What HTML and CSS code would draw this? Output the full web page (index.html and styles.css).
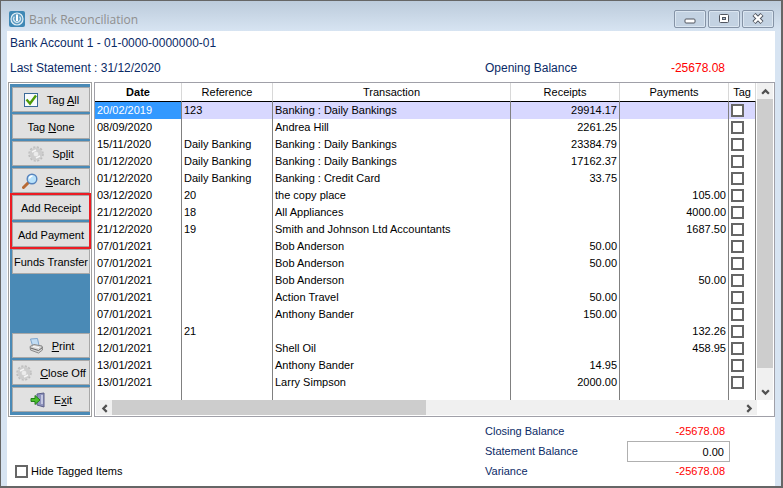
FILE: index.html
```html
<!DOCTYPE html>
<html lang="en">
<head>
    <meta charset="UTF-8">
    <meta name="viewport" content="width=device-width, initial-scale=1.0">
    <title>Bank Reconciliation</title>
    <link rel="stylesheet" href="styles.css">
</head>
<body>
    <div class="window">
        <!-- Title bar -->
        <header class="title-bar">
            <svg class="app-icon" viewBox="0 0 16 16">
                <rect width="16" height="16" rx="2" fill="#3f88b5"/>
                <circle cx="8" cy="8" r="6" fill="#5f9dc3" stroke="#e4f0f7" stroke-width="1.2"/>
                <path d="M5.4 5.6a3.4 3.4 0 1 0 5.2 0" fill="none" stroke="#d5e7f2" stroke-width="1.2"/>
                <path d="M8 3.5v6.5" stroke="#fff" stroke-width="2"/>
            </svg>
            <h1>Bank Reconciliation</h1>
            <div class="window-controls">
                <button type="button" aria-label="Minimize">
                    <svg viewBox="0 0 12 12"><rect x="1" y="6" width="10" height="4" rx="1" fill="#fff" stroke="#50555f"/></svg>
                </button>
                <button type="button" aria-label="Maximize">
                    <svg viewBox="0 0 12 12"><rect x="1.5" y="1.5" width="9" height="8" rx="1" fill="#fff" stroke="#50555f"/><rect x="4.5" y="4.5" width="3" height="2" fill="#a9bdd4" stroke="#50555f"/></svg>
                </button>
                <button type="button" aria-label="Close">
                    <svg viewBox="0 0 12 12"><path d="M2 1.5l8 8M10 1.5l-8 8" stroke="#50555f" stroke-width="4.4"/><path d="M2.4 1.9l7.2 7.2M9.6 1.9l-7.2 7.2" stroke="#fff" stroke-width="2.4"/></svg>
                </button>
            </div>
        </header>

        <main class="content">
            <!-- Account summary -->
            <div class="account">Bank Account 1 - 01-0000-0000000-01</div>
            <div class="statement">
                <span>Last Statement : 31/12/2020</span>
                <div class="opening">
                    <span>Opening Balance</span>
                    <span class="negative">-25678.08</span>
                </div>
            </div>

            <div class="panels">
                <!-- Actions -->
                <nav class="sidebar">
                    <button type="button">
                        <svg class="icon" viewBox="0 0 16 16"><rect x="1.5" y="1.5" width="13" height="13" fill="#f8fbfd" stroke="#3b6a98"/><path d="M3.5 7.5l3.5 4 6-8" fill="none" stroke="#4f9a06" stroke-width="2.4"/></svg>
                        <span>Tag <u>A</u>ll</span>
                    </button>
                    <button type="button"><span>Tag <u>N</u>one</span></button>
                    <button type="button">
                        <svg class="icon" viewBox="0 0 16 16"><circle cx="8" cy="8" r="6.5" fill="none" stroke="#bdbdbd" stroke-width="2.5" stroke-dasharray="2 1.4"/><circle cx="8" cy="8" r="4.5" fill="none" stroke="#cdcdcd" stroke-width="4"/><path d="M4 6l4-2M8 12l4-2" stroke="#f4f4f4" stroke-width="1.4"/><circle cx="8" cy="8" r="2" fill="#ececec"/></svg>
                        <span>Sp<u>l</u>it</span>
                    </button>
                    <button type="button">
                        <svg class="icon" viewBox="0 0 16 16"><path d="M1.5 14.5l5-5" stroke="#b86a35" stroke-width="3" stroke-linecap="round"/><circle cx="10" cy="6" r="4.8" fill="#b9e2fb" stroke="#5784bd" stroke-width="1.4"/><path d="M7.5 5.5a3 3 0 0 1 3-2.5" fill="none" stroke="#fff" stroke-width="1.5"/></svg>
                        <span><u>S</u>earch</span>
                    </button>
                    <div class="highlighted">
                        <button type="button">Add Receipt</button>
                        <button type="button">Add Payment</button>
                    </div>
                    <button type="button">Funds Transfer</button>
                    <div class="spacer"></div>
                    <button type="button">
                        <svg class="icon" viewBox="0 0 16 16"><path d="M2.5 1l7-.5 1.5 7-6 1.5z" fill="#c2ddf4" stroke="#7fa6cd"/><path d="M2 8.500l4-2 8 1.500.5 4-4 3-8-3z" fill="#d7d7d7" stroke="#888"/><path d="M2.500 10l8 2.500 4-3" fill="none" stroke="#666"/><path d="M5 8.500l6 1" stroke="#fff"/></svg>
                        <span><u>P</u>rint</span>
                    </button>
                    <button type="button">
                        <svg class="icon" viewBox="0 0 16 16"><circle cx="8" cy="8" r="6.5" fill="none" stroke="#bdbdbd" stroke-width="2.5" stroke-dasharray="2 1.4"/><circle cx="8" cy="8" r="4.5" fill="none" stroke="#cdcdcd" stroke-width="4"/><path d="M4 6l4-2M8 12l4-2" stroke="#f4f4f4" stroke-width="1.4"/><circle cx="8" cy="8" r="2" fill="#ececec"/></svg>
                        <span><u>C</u>lose Off</span>
                    </button>
                    <button type="button">
                        <svg class="icon" viewBox="0 0 16 16"><path d="M7 2l7-1v14l-7-2z" fill="#8f93bd" stroke="#5b5f88"/><path d="M12 3v9" stroke="#c5c8e2" stroke-width="2"/><path d="M1 6.5h4v-3l5 4.500-5 4.500v-3h-4z" fill="#4cc02c" stroke="#23801a"/></svg>
                        <span>E<u>x</u>it</span>
                    </button>
                </nav>

                <!-- Transactions -->
                <section class="grid">
                    <div class="grid-body">
                        <table>
                            <colgroup>
                                <col class="col-date"><col class="col-ref"><col><col class="col-amount"><col class="col-amount"><col class="col-tag">
                            </colgroup>
                            <thead>
                                <tr><th class="sorted">Date</th><th>Reference</th><th>Transaction</th><th>Receipts</th><th>Payments</th><th>Tag</th></tr>
                            </thead>
                            <tbody>
                                <tr class="selected"><td>20/02/2019</td><td>123</td><td>Banking : Daily Bankings</td><td>29914.17</td><td></td><td><input type="checkbox" aria-label="Tag"></td></tr>
                                <tr><td>08/09/2020</td><td></td><td>Andrea Hill</td><td>2261.25</td><td></td><td><input type="checkbox" aria-label="Tag"></td></tr>
                                <tr><td>15/11/2020</td><td>Daily Banking</td><td>Banking : Daily Bankings</td><td>23384.79</td><td></td><td><input type="checkbox" aria-label="Tag"></td></tr>
                                <tr><td>01/12/2020</td><td>Daily Banking</td><td>Banking : Daily Bankings</td><td>17162.37</td><td></td><td><input type="checkbox" aria-label="Tag"></td></tr>
                                <tr><td>01/12/2020</td><td>Daily Banking</td><td>Banking : Credit Card</td><td>33.75</td><td></td><td><input type="checkbox" aria-label="Tag"></td></tr>
                                <tr><td>03/12/2020</td><td>20</td><td>the copy place</td><td></td><td>105.00</td><td><input type="checkbox" aria-label="Tag"></td></tr>
                                <tr><td>21/12/2020</td><td>18</td><td>All Appliances</td><td></td><td>4000.00</td><td><input type="checkbox" aria-label="Tag"></td></tr>
                                <tr><td>21/12/2020</td><td>19</td><td>Smith and Johnson Ltd Accountants</td><td></td><td>1687.50</td><td><input type="checkbox" aria-label="Tag"></td></tr>
                                <tr><td>07/01/2021</td><td></td><td>Bob Anderson</td><td>50.00</td><td></td><td><input type="checkbox" aria-label="Tag"></td></tr>
                                <tr><td>07/01/2021</td><td></td><td>Bob Anderson</td><td>50.00</td><td></td><td><input type="checkbox" aria-label="Tag"></td></tr>
                                <tr><td>07/01/2021</td><td></td><td>Bob Anderson</td><td></td><td>50.00</td><td><input type="checkbox" aria-label="Tag"></td></tr>
                                <tr><td>07/01/2021</td><td></td><td>Action Travel</td><td>50.00</td><td></td><td><input type="checkbox" aria-label="Tag"></td></tr>
                                <tr><td>07/01/2021</td><td></td><td>Anthony Bander</td><td>150.00</td><td></td><td><input type="checkbox" aria-label="Tag"></td></tr>
                                <tr><td>12/01/2021</td><td>21</td><td></td><td></td><td>132.26</td><td><input type="checkbox" aria-label="Tag"></td></tr>
                                <tr><td>12/01/2021</td><td></td><td>Shell Oil</td><td></td><td>458.95</td><td><input type="checkbox" aria-label="Tag"></td></tr>
                                <tr><td>13/01/2021</td><td></td><td>Anthony Bander</td><td>14.95</td><td></td><td><input type="checkbox" aria-label="Tag"></td></tr>
                                <tr><td>13/01/2021</td><td></td><td>Larry Simpson</td><td>2000.00</td><td></td><td><input type="checkbox" aria-label="Tag"></td></tr>
                                <tr class="filler"><td></td><td></td><td></td><td></td><td></td><td></td></tr>
                            </tbody>
                        </table>
                        <div class="scroll-v">
                            <button type="button" aria-label="Scroll up"><svg viewBox="0 0 8 8"><path d="M1 6l3-3 3 3" /></svg></button>
                            <div class="thumb"></div>
                            <button type="button" aria-label="Scroll down"><svg viewBox="0 0 8 8"><path d="M1 2l3 3 3-3" /></svg></button>
                        </div>
                    </div>
                    <div class="scroll-h">
                        <button type="button" aria-label="Scroll left"><svg viewBox="0 0 8 8"><path d="M6 1l-3 3 3 3" /></svg></button>
                        <div class="thumb"></div>
                        <button type="button" aria-label="Scroll right"><svg viewBox="0 0 8 8"><path d="M2 1l3 3-3 3" /></svg></button>
                    </div>
                </section>
            </div>

            <!-- Totals -->
            <footer class="footer">
                <label class="hide-tagged"><input type="checkbox"> Hide Tagged Items</label>
                <div class="totals">
                    <span>Closing Balance</span>
                    <span class="negative">-25678.08</span>
                    <label for="statementBalance">Statement Balance</label>
                    <input type="text" id="statementBalance" value="0.00">
                    <span>Variance</span>
                    <span class="negative">-25678.08</span>
                </div>
            </footer>
        </main>
    </div>
</body>
</html>
```
FILE: styles.css
```css
* {
    box-sizing: border-box;
}
body {
    margin: 0;
    font-family: "Liberation Sans", Arial, sans-serif;
    font-size: 11px;
    color: #000;
}
button, input {
    font: inherit;
    color: inherit;
    margin: 0;
}
.window {
    display: flex;
    flex-direction: column;
    min-height: 100vh;
    border: 1px solid #666;
    border-right-width: 2px;
    border-bottom-width: 2px;
    background: #d7e4f2;
    padding: 0 6px;
}
.title-bar {
    display: flex;
    align-items: center;
    height: 30px;
    margin: 0 -6px;
    padding: 6px 7px 0 8px;
    background: linear-gradient(#bccbdb, #d7e4f2);
}
.app-icon {
    width: 16px;
    height: 16px;
}
.title-bar h1 {
    flex: 1;
    margin: 0 0 0 4px;
    font-family: "Open Sans", sans-serif;
    font-size: 12px;
    font-weight: normal;
    color: #8f8f8f;
}
.window-controls {
    display: flex;
    gap: 2px;
}
.window-controls button {
    display: flex;
    align-items: center;
    justify-content: center;
    width: 32px;
    height: 18px;
    padding: 0;
    border: 1px solid #8593a6;
    border-radius: 2px;
    background: #c3d2e2;
    box-shadow: inset 0 0 0 1px #dbe6f1;
}
.window-controls svg {
    width: 12px;
    height: 12px;
}
.content {
    flex: 1;
    display: flex;
    flex-direction: column;
    background: #fff;
}
.account, .statement {
    height: 25px;
    line-height: 25px;
    padding-left: 3px;
    font-size: 12px;
    color: #0a2a66;
}
.statement {
    display: flex;
    justify-content: space-between;
    height: 26px;
}
.opening {
    display: flex;
    justify-content: space-between;
    width: 240px;
    margin-right: 50px;
}
.negative {
    color: #f00;
}

/* Panels */
.panels {
    display: flex;
    gap: 2px;
    height: 335px;
    padding: 0 0 0 1px;
}
.sidebar {
    display: flex;
    flex-direction: column;
    gap: 2px;
    width: 84px;
    padding: 4px 2px 4px 3px;
    border: 1px solid #a0a0a0;
    background: #4a8ab6;
    box-shadow: inset 0 0 0 1px #fff;
}
.sidebar button {
    display: flex;
    align-items: center;
    justify-content: center;
    gap: 8px;
    width: 78px;
    height: 25px;
    padding: 0;
    border: 1px solid #a8a8a8;
    background: #e1e1e1;
    white-space: nowrap;
}
.icon {
    width: 16px;
    height: 16px;
}
.highlighted {
    display: flex;
    flex-direction: column;
    gap: 2px;
    outline: 2px solid #ec1c24;
}
.spacer {
    flex: 1;
}

/* Transaction table */
.grid {
    flex: 1;
    display: flex;
    flex-direction: column;
    border: 1px solid #a0a0a8;
}
.grid-body {
    flex: 1;
    display: flex;
}
table {
    flex: 1;
    table-layout: fixed;
    border-collapse: separate;
    border-spacing: 0;
}
.col-date {
    width: 87px;
}
.col-ref {
    width: 91px;
}
.col-amount {
    width: 109px;
}
.col-tag {
    width: 27px;
}
th {
    height: 19px;
    padding: 0;
    border-right: 1px solid #d8d8d8;
    border-bottom: 1px solid #000;
    font-weight: normal;
}
.sorted {
    font-weight: bold;
}
td {
    height: 17px;
    padding: 0 2px;
    border-right: 1px solid #808080;
    line-height: 15px;
    white-space: nowrap;
}
td:nth-child(4), td:nth-child(5) {
    text-align: right;
}
.selected td {
    background: #d8d8ff;
}
.selected td:first-child {
    background: #3399ff;
    color: #fff;
}
.filler td {
    height: 9px;
    line-height: 9px;
}
input[type="checkbox"] {
    appearance: none;
    display: block;
    width: 13px;
    height: 13px;
    border: 2px solid #666;
    background: #fff;
}

/* Scroll bars */
.scroll-v, .scroll-h {
    display: flex;
    background: #f0f0f0;
}
.scroll-v {
    flex-direction: column;
    width: 16px;
    margin: 0 1px;
}
.scroll-h {
    height: 15px;
    margin: 0 17px 1px 1px;
}
.scroll-v button, .scroll-h button {
    display: flex;
    align-items: center;
    justify-content: center;
    width: 16px;
    height: 16px;
    padding: 0;
    border: 0;
    background: none;
}
.scroll-v svg, .scroll-h svg {
    width: 9px;
    height: 9px;
    fill: none;
    stroke: #505050;
    stroke-width: 2;
}
.thumb {
    background: #cdcdcd;
}
.scroll-v .thumb {
    height: 269px;
    margin-bottom: auto;
}
.scroll-h .thumb {
    width: 314px;
    margin-right: auto;
}

/* Footer */
.footer {
    flex: 1;
    display: flex;
    align-items: flex-end;
    justify-content: space-between;
    padding: 6px 45px 6px 8px;
}
.hide-tagged {
    display: flex;
    align-items: center;
    gap: 3px;
    line-height: 17px;
}
.totals {
    display: grid;
    grid-template-columns: 142px 103px;
    align-items: center;
    row-gap: 1px;
    line-height: 17px;
    color: #0a2a66;
}
.totals .negative {
    padding-right: 5px;
    text-align: right;
}
.totals input {
    width: 103px;
    height: 21px;
    padding: 0 5px;
    border: 1px solid #b0b0b0;
    text-align: right;
    color: #000;
}
```
